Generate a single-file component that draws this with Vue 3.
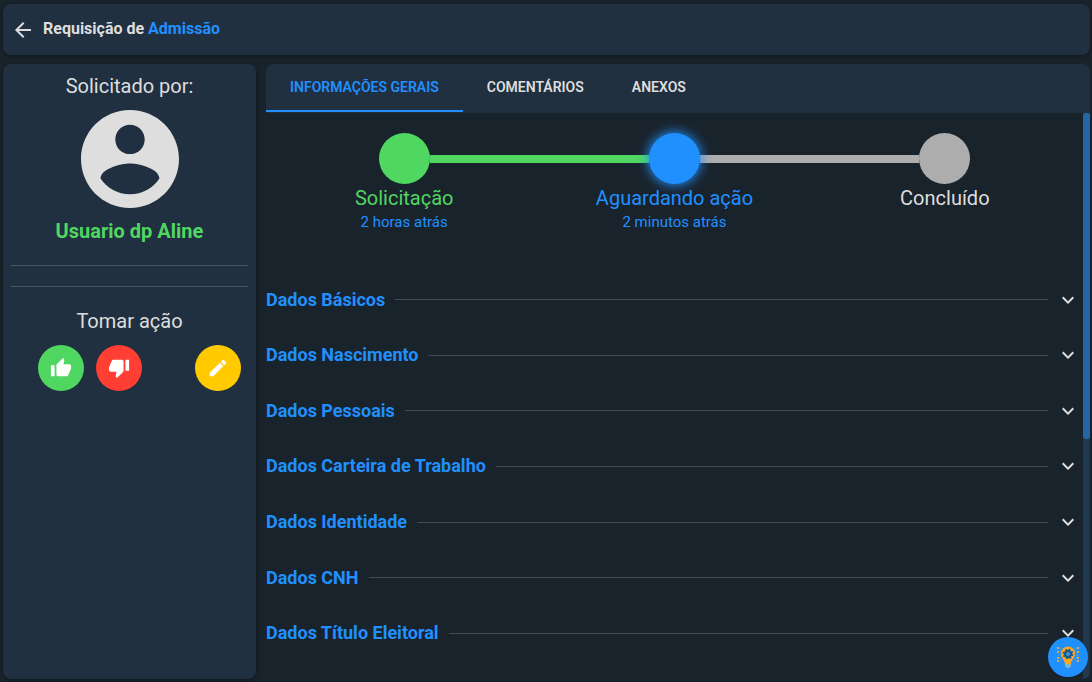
<script setup>
import { ref } from 'vue'

const tabs = ['Informações Gerais', 'Comentários', 'Anexos']
const activeTab = ref(0)

const steps = [
  { label: 'Solicitação', time: '2 horas atrás', state: 'done' },
  { label: 'Aguardando ação', time: '2 minutos atrás', state: 'current' },
  { label: 'Concluído', time: '', state: 'pending' },
]

const sections = [
  'Dados Básicos',
  'Dados Nascimento',
  'Dados Pessoais',
  'Dados Carteira de Trabalho',
  'Dados Identidade',
  'Dados CNH',
  'Dados Título Eleitoral',
]
</script>

<template>
  <div class="page">
    <header class="topbar card">
      <button class="back" type="button" aria-label="Voltar">
        <svg viewBox="0 0 24 24"><path d="M20 11H7.83l5.59-5.59L12 4l-8 8 8 8 1.41-1.41L7.83 13H20v-2z" /></svg>
      </button>
      <h1 class="title">Requisição de <span>Admissão</span></h1>
    </header>

    <div class="body">
      <aside class="sidebar card">
        <h2 class="side-title">Solicitado por:</h2>
        <svg class="avatar" viewBox="2 2 20 20" aria-hidden="true">
          <path d="M12 2C6.48 2 2 6.48 2 12s4.48 10 10 10 10-4.48 10-10S17.52 2 12 2zm0 3c1.66 0 3 1.34 3 3s-1.34 3-3 3-3-1.34-3-3 1.34-3 3-3zm0 14.2c-2.5 0-4.71-1.28-6-3.22.03-1.99 4-3.08 6-3.08 1.99 0 5.97 1.09 6 3.08-1.29 1.94-3.5 3.22-6 3.22z" />
        </svg>
        <p class="user">Usuario dp Aline</p>
        <hr class="rule" />
        <hr class="rule" />
        <h2 class="side-title">Tomar ação</h2>
        <div class="actions">
          <button class="round approve" type="button" aria-label="Aprovar">
            <svg viewBox="0 0 24 24"><path d="M1 21h4V9H1v12zm22-11c0-1.1-.9-2-2-2h-6.31l.95-4.57.03-.32c0-.41-.17-.79-.44-1.06L14.17 1 7.59 7.59C7.22 7.95 7 8.45 7 9v10c0 1.1.9 2 2 2h9c.83 0 1.54-.5 1.84-1.22l3.02-7.05c.09-.23.14-.47.14-.73v-2z" /></svg>
          </button>
          <button class="round reject" type="button" aria-label="Reprovar">
            <svg viewBox="0 0 24 24"><path d="M15 3H6c-.83 0-1.54.5-1.84 1.22l-3.02 7.05c-.09.23-.14.47-.14.73v2c0 1.1.9 2 2 2h6.31l-.95 4.57-.03.32c0 .41.17.79.44 1.06L9.83 23l6.59-6.59c.36-.36.58-.86.58-1.41V5c0-1.1-.9-2-2-2zm4 0v12h4V3h-4z" /></svg>
          </button>
          <button class="round edit" type="button" aria-label="Editar">
            <svg viewBox="0 0 24 24"><path d="M3 17.25V21h3.75L17.81 9.94l-3.75-3.75L3 17.25zM20.71 7.04c.39-.39.39-1.02 0-1.41l-2.34-2.34c-.39-.39-1.02-.39-1.41 0l-1.83 1.83 3.75 3.75 1.83-1.83z" /></svg>
          </button>
        </div>
      </aside>

      <main class="main">
        <nav class="tabs" role="tablist">
          <button
            v-for="(tab, i) in tabs"
            :key="tab"
            type="button"
            role="tab"
            class="tab"
            :class="{ active: activeTab === i }"
            :aria-selected="activeTab === i"
            @click="activeTab = i"
          >{{ tab }}</button>
        </nav>

        <div class="panel">
          <div class="content">
            <ol class="stepper">
              <li v-for="step in steps" :key="step.label" class="step" :class="step.state">
                <div class="track">
                  <span class="bar before"></span>
                  <span class="dot"></span>
                  <span class="bar after"></span>
                </div>
                <span class="label">{{ step.label }}</span>
                <span v-if="step.time" class="time">{{ step.time }}</span>
              </li>
            </ol>

            <div class="sections">
              <button v-for="name in sections" :key="name" type="button" class="section">
                <span class="name">{{ name }}</span>
                <span class="line"></span>
                <svg class="chevron" viewBox="0 0 24 24" aria-hidden="true"><path d="M7.41 8.59 12 13.17l4.59-4.58L18 10l-6 6-6-6 1.41-1.41z" /></svg>
              </button>
            </div>
          </div>
          <div class="scroll-track" aria-hidden="true"><div class="scroll-thumb"></div></div>
        </div>
      </main>
    </div>

    <button class="tip" type="button" aria-label="Dicas">
      <svg viewBox="0 0 24 24" fill="none">
        <path stroke="#5d9bb8" d="M2 3h2l2 3M2 7h3M1.500 10h3M2 13h3M2 16h2l2-2M22 3h-2l-2 3M22 7h-3M22.500 10h-3M22 13h-3M22 16h-2l-2-2" />
        <path fill="#d9a650" d="M1 2h2v2H1zM1 6h2v2H1zM1 12h2v2H1zM1 15h2v2H1zM21 2h2v2h-2zM21 6h2v2h-2zM21 12h2v2h-2zM21 15h2v2h-2z" />
        <path fill="#ffa51e" d="M12 1.500a7 7 0 0 0-7 7c0 4.500 3.500 5.500 4 10.500h6c.5-5 4-6 4-10.500a7 7 0 0 0-7-7z" />
        <circle cx="12" cy="9" r="3" stroke="#14598e" stroke-width="2.400" />
        <circle cx="12" cy="9" r="4.600" stroke="#14598e" stroke-width="1.400" stroke-dasharray="1.800 1.813" />
        <circle cx="12" cy="9" r="1.800" fill="#2190ff" />
        <path fill="#7fb3c8" d="M9 19h6v2l-1.500 2h-3L9 21z" />
      </svg>
    </button>
  </div>
</template>

<style>
body {
  margin: 0;
  background: #19232c;
}
</style>

<style scoped>
.page {
  box-sizing: border-box;
  display: flex;
  flex-direction: column;
  gap: 9px;
  height: 100vh;
  padding: 4px 2px 3px 3px;
  overflow: hidden;
  background: #19232c;
  color: #dedede;
  font-family: Roboto, "Liberation Sans", sans-serif;
}

button {
  margin: 0;
  padding: 0;
  border: 0;
  background: none;
  color: inherit;
  font: inherit;
  cursor: pointer;
}

svg {
  display: block;
}

.card {
  border-radius: 8px;
  background: #213040;
  box-shadow: 0 1px 4px rgba(0, 0, 0, 0.4);
}

.topbar {
  display: flex;
  flex: none;
  align-items: center;
  gap: 8px;
  height: 51px;
  padding: 0 8px;
}

.back svg {
  width: 24px;
  height: 24px;
  fill: #dedede;
}

.title {
  margin: 0;
  padding-bottom: 2px;
  font-size: 16px;
  font-weight: 700;
  line-height: 24px;
}

.title span {
  color: #2190ff;
}

.body {
  display: flex;
  flex: 1;
  gap: 10px;
  min-height: 0;
}

.sidebar {
  box-sizing: border-box;
  flex: none;
  width: 253px;
  padding: 8px;
}

.side-title {
  margin: 0;
  font-size: 20px;
  font-weight: 400;
  line-height: 28px;
  text-align: center;
}

.avatar {
  width: 98px;
  height: 98px;
  margin: 10px auto 9px;
  fill: #dedede;
}

.user {
  margin: 0 0 20px;
  color: #50d761;
  font-size: 20px;
  font-weight: 700;
  line-height: 28px;
  text-align: center;
}

.rule {
  height: 1px;
  margin: 0 0 20px;
  border: 0;
  background: #47535f;
}

.actions {
  display: flex;
  gap: 12px;
  padding: 10px 7px 0 27px;
}

.round {
  display: flex;
  align-items: center;
  justify-content: center;
  width: 46px;
  height: 46px;
  border-radius: 50%;
}

.round svg {
  width: 22px;
  height: 22px;
  fill: #fff;
}

.approve {
  background: #50d761;
}

.reject {
  background: #ff3e34;
}

.edit {
  margin-left: auto;
  background: #ffcb00;
}

.main {
  display: flex;
  flex: 1;
  flex-direction: column;
  min-width: 0;
}

.tabs {
  display: flex;
  flex: none;
  height: 49px;
  border-radius: 8px 8px 0 0;
  background: #213040;
}

.tab {
  height: 48px;
  padding: 0 24px;
  border-bottom: 2px solid transparent;
  font-size: 14px;
  font-weight: 600;
  text-transform: uppercase;
}

.tab.active {
  border-color: #2190ff;
  color: #2190ff;
}

.panel {
  display: flex;
  flex: 1;
  min-height: 0;
}

.content {
  flex: 1;
  min-width: 0;
  overflow: hidden;
}

.stepper {
  display: grid;
  grid-template-columns: repeat(3, 1fr);
  margin: 0;
  padding: 20px 3px 0;
  list-style: none;
}

.step {
  display: flex;
  flex-direction: column;
  align-items: center;
}

.track {
  display: flex;
  align-items: center;
  align-self: stretch;
}

.bar {
  flex: 1;
  height: 8px;
  background: #adadad;
}

.done .after,
.current .before {
  background: #50d761;
}

.done .before,
.pending .after {
  background: none;
}

.dot {
  width: 51px;
  height: 51px;
  border-radius: 50%;
  background: #adadad;
}

.done .dot {
  background: #50d761;
}

.current .dot {
  z-index: 1;
  background: #2190ff;
  box-shadow: 0 0 12px 1px #2190ff;
}

.label {
  font-size: 20px;
  line-height: 28px;
}

.done .label {
  color: #50d761;
}

.current .label,
.time {
  color: #2190ff;
}

.time {
  font-size: 15px;
  line-height: 20px;
}

.sections {
  display: grid;
  grid-auto-rows: 1fr;
  min-height: 389px;
  margin-top: 40px;
}

.section {
  display: flex;
  align-items: center;
  width: 100%;
  padding-right: 3px;
  text-align: left;
}

.name {
  padding-bottom: 1px;
  color: #2190ff;
  font-size: 18px;
  font-weight: 700;
}

.line {
  flex: 1;
  height: 1px;
  margin: 0 8px 0 10px;
  background: #414b54;
}

.chevron {
  width: 24px;
  height: 24px;
  fill: #dedede;
}

.scroll-track {
  flex: none;
  width: 7px;
  border-radius: 0 0 7px 0;
  background: #213950;
}

.scroll-thumb {
  height: 57.6%;
  border-radius: 3px;
  background: #2467a9;
}

.tip {
  position: fixed;
  right: 4px;
  bottom: 5px;
  z-index: 2;
  display: flex;
  align-items: center;
  justify-content: center;
  width: 40px;
  height: 40px;
  border-radius: 50%;
  background: #2190ff;
}

.tip svg {
  width: 24px;
  height: 24px;
}
</style>
